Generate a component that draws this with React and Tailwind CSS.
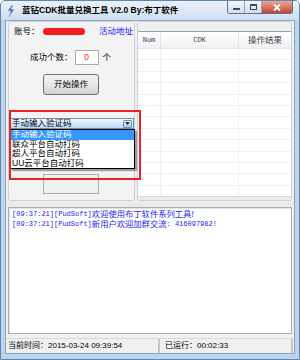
import React from "react";

const cjk = "font-['Liberation_Sans','Noto_Sans_CJK_SC',sans-serif]";
const mono = "font-['Liberation_Mono','Noto_Sans_CJK_SC',monospace]";

function TitleBar() {
  return (
    <div className="h-[19px] flex items-center pl-[6px] bg-gradient-to-b from-[#eaf1f9] to-[#cfdff0] relative">
      <svg width="8" height="12" viewBox="0 0 8 12" className="shrink-0">
        <path d="M5 0 L1 6 L4 6 L2 12 L7 4.5 L4 4.5 L6 0 Z" fill="#3f6fb0" stroke="#9bb6d6" strokeWidth="0.5" />
      </svg>
      <span className={`ml-[7px] text-[8.5px] font-bold text-black leading-none ${cjk}`}>
        蓝钻CDK批量兑换工具 V2.0 By:布丁软件
      </span>
      <div className="absolute right-[6px] top-0 flex h-[13px] border border-t-0 border-[#5d7390] rounded-b-[3px] overflow-hidden">
        <div className="w-[17px] flex items-end justify-center pb-[3px] bg-gradient-to-b from-[#f4f8fc] to-[#d0deed] border-r border-[#8ea3bc]">
          <div className="w-[7px] h-[2px] bg-[#3a4a5e]" />
        </div>
        <div className="w-[17px] flex items-center justify-center bg-gradient-to-b from-[#f4f8fc] to-[#d0deed] border-r border-[#8ea3bc]">
          <div className="w-[7px] h-[6px] border border-t-2 border-[#3a4a5e]" />
        </div>
        <div className="w-[30px] flex items-center justify-center bg-gradient-to-b from-[#e9a796] to-[#c4432e]">
          <svg width="8" height="7" viewBox="0 0 8 7">
            <path d="M1 0.5 L7 6.5 M7 0.5 L1 6.5" stroke="#ffffff" strokeWidth="1.8" />
          </svg>
        </div>
      </div>
    </div>
  );
}

function LeftPanel() {
  return (
    <div className={`w-[127px] shrink-0 border border-[#c9d2da] rounded-[3px] bg-[#f3f3f3] flex flex-col ${cjk} text-[8.5px] text-black`}>
      <div className="mt-[4px] h-[11px] flex items-center pl-[5px] pr-[1px]">
        <span>账号：</span>
        <div className="ml-[3px] w-[42px] h-[7px] rounded-full bg-[#f51e1e]" />
        <span className="ml-auto text-[#1a1aff]">活动地址</span>
      </div>
      <div className="mt-[13px] h-[15px] flex items-center pl-[21px]">
        <span>成功个数：</span>
        <div className="ml-[2px] w-[24px] h-[15px] border border-[#abadb3] bg-white flex items-center justify-center text-[#ff2020] font-['Liberation_Sans',sans-serif]">
          0
        </div>
        <span className="ml-[4px]">个</span>
      </div>
      <div className="mt-[9px] ml-[34px] w-[56px] h-[21px] rounded-[3px] border border-[#707070] bg-gradient-to-b from-[#f2f2f2] via-[#e8e8e8] to-[#d2d2d2] flex items-center justify-center">
        开始操作
      </div>
      <div className="relative mt-[23px] ml-[1px] w-[124px] h-[11px] border border-[#6f8fb5] bg-gradient-to-b from-[#f3f9fe] to-[#b9daf5] flex items-center">
        <span className="pl-[1px] leading-none">手动输入验证码</span>
        <div className="ml-auto mr-[1px] w-[9px] h-[8px] border border-[#6f8fb5] rounded-[1px] bg-gradient-to-b from-[#eaf4fd] to-[#a9cbe8] flex items-center justify-center">
          <svg width="5" height="3" viewBox="0 0 5 3">
            <path d="M0 0 L5 0 L2.5 3 Z" fill="#1d2f47" />
          </svg>
        </div>
        <div className="absolute left-[-1px] top-[10px] w-[125px] bg-white border border-black shadow-[2px_2px_1px_rgba(0,0,0,0.35)] z-10 leading-[9.5px]">
          <div className="h-[9.5px] bg-[#3399ff] text-white pl-[1px]">手动输入验证码</div>
          <div className="h-[9.5px] pl-[1px]">联众平台自动打码</div>
          <div className="h-[9.5px] pl-[1px]">超人平台自动打码</div>
          <div className="h-[9.5px] pl-[1px]">UU云平台自动打码</div>
        </div>
      </div>
      <div className="mt-[45px] ml-[34px] w-[56px] h-[20px] border border-[#adadad] bg-[#f0f0f0]" />
    </div>
  );
}

function TablePanel() {
  const rows = Array.from({ length: 13 });
  return (
    <div className="flex-1 border border-[#c9d2da] rounded-[3px] bg-[#f0f0f0] flex flex-col overflow-hidden">
      <div className="h-[9px] shrink-0" />
      <div className="flex-1 bg-white border-t border-[#9aa1a8] flex flex-col overflow-hidden">
        <div className="h-[17px] shrink-0 flex bg-gradient-to-b from-[#ffffff] to-[#eef0f3] border-b border-[#e3e6ea] text-[#444]">
          <div className={`w-[23px] flex items-center justify-center border-r border-[#e3e5e8] text-[7px] ${mono}`}>Num</div>
          <div className={`w-[78px] flex items-center justify-center border-r border-[#e3e5e8] text-[7px] ${mono}`}>CDK</div>
          <div className={`flex-1 flex items-center justify-center text-[8.5px] ${cjk}`}>操作结果</div>
        </div>
        {rows.map((_, i) => (
          <div key={i} className="h-[11.4px] shrink-0 flex border-b border-[#f0f0f0]">
            <div className="w-[23px] border-r border-[#f0f0f0]" />
            <div className="w-[78px] border-r border-[#f0f0f0]" />
            <div className="flex-1" />
          </div>
        ))}
      </div>
      <div className="h-[4px] shrink-0 bg-[#ececec] border-t border-[#d8d8d8]" />
    </div>
  );
}

function LogBox() {
  const lines = [
    ["[09:37:21][PudSoft]", "欢迎使用布丁软件系列工具!", ""],
    ["[09:37:21][PudSoft]", "新用户欢迎加群交流", ": 416097982!"],
  ];
  return (
    <div className="mx-[2px] h-[127px] border border-[#a7adb3] bg-white shadow-[inset_1px_1px_0_#e2e3ea] pl-[3px] pt-[1px] text-[#2424f0]">
      {lines.map((l, i) => (
        <div key={i} className="h-[10px] flex items-center whitespace-nowrap leading-none">
          <span className={`text-[7px] ${mono}`}>{l[0]}</span>
          <span className={`text-[8.3px] ${cjk}`}>{l[1]}</span>
          {l[2] && <span className={`text-[7px] ${mono}`}>{l[2]}</span>}
        </div>
      ))}
    </div>
  );
}

function StatusBar() {
  return (
    <div className={`flex-1 flex border-t border-[#d9d9d9] bg-[#f0f0f0] text-[8px] text-black ${cjk}`}>
      <div className="w-[154px] flex items-center pl-[2px] border-r-2 border-[#c8c8c8]">
        当前时间：2015-03-24 09:39:54
      </div>
      <div className="w-[133px] flex items-center pl-[5px] border-r-2 border-[#c8c8c8]">
        已运行：00:02:33
      </div>
    </div>
  );
}

export default function App() {
  return (
    <div className="relative w-[300px] h-[360px] overflow-hidden bg-[#bcd4ec] border border-[#5f86ae] rounded-t-[5px] flex flex-col">
      <TitleBar />
      <div className="flex-1 mx-[4px] mb-[5px] bg-[#f0f0f0] border border-[#8ca4bf] flex flex-col">
        <div className="h-[180px] shrink-0 flex gap-[2px] px-[2px]">
          <LeftPanel />
          <TablePanel />
        </div>
        <div className="h-[6px] shrink-0 bg-[#ebebeb]" />
        <LogBox />
        <div className="h-[4px] shrink-0" />
        <StatusBar />
      </div>
      <div className="absolute left-[8px] top-[109px] w-[132px] h-[70px] border-2 border-[#e8242a] z-20 pointer-events-none" />
    </div>
  );
}
